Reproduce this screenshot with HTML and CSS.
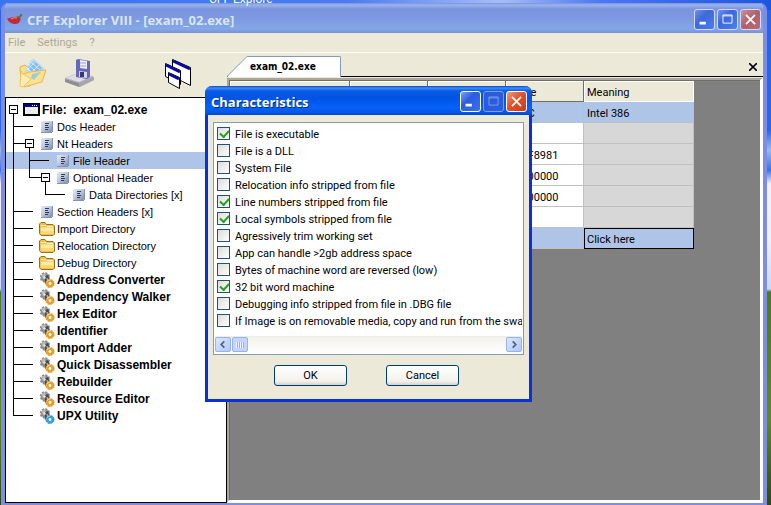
FILE: index.html
```
<!DOCTYPE html>
<html lang="en">
<head>
<meta charset="utf-8">
<title>CFF Explorer VIII - [exam_02.exe]</title>
<link rel="stylesheet" href="styles.css">
</head>
<body>
<svg class="defs" aria-hidden="true">
  <linearGradient id="steel" x1="0" y1="0" x2="1" y2="1"><stop offset="0" stop-color="#e6e9f2"/><stop offset=".45" stop-color="#c3cbdd"/><stop offset="1" stop-color="#7d8eb0"/></linearGradient>
  <symbol id="page" viewBox="0 0 13 13"><rect x="1" y="1" width="11" height="11" rx="1" fill="url(#steel)"/><path d="M1 12.500h11M12.500 1v11" stroke="#8494b4"/><path d="M5 3.500h4M5 5.500h3M5 7.500h4M5 9.500h3" stroke="#2a3a60"/></symbol>
  <symbol id="folder" viewBox="0 0 16 14"><path d="M.5 11.500V2L2 .5h4L7.500 2.500H14L15.500 4v8L14 13.500H2z" fill="#f0c24c" stroke="#98701c"/><path d="M2 5.500h12.500V12H2z" fill="#ffeaa6"/><path d="M2 3.500h5l1 1h6" stroke="#fff3c4" fill="none"/><path d="M2 9h12.500v3H2z" fill="#fbd873"/></symbol>
  <symbol id="gears" viewBox="0 0 16 16"><circle cx="6" cy="5.500" r="4" fill="#909090" stroke="#8a8a8a" stroke-width="2.500" stroke-dasharray="2 1.100"/><path d="M2 3l4-2 1 3-3 3z" fill="#b8b8b8"/><path d="M6 4l3-1 1 2-1 5-3 2V8z" fill="#4c4c4c"/><path d="M4 5l2-1 1 2-2 1z" fill="#e2e2e2"/><path d="M8 6l1 5" stroke="#d0d0d0"/><circle cx="11" cy="11.500" r="3.300" fill="none" stroke="currentColor" stroke-width="2.500" stroke-dasharray="2.100 .5"/><circle cx="11" cy="11.500" r="2.400" fill="none" stroke="currentColor" stroke-width="2"/><path d="M8 10q1-2 3-2" stroke="#fff" stroke-opacity=".5" fill="none"/><circle cx="11" cy="11.500" r="1" fill="#fff"/></symbol>
</svg>
<div class="desktop">
<span class="desktop-label">CFF Explore</span>
<main class="window">
  <header class="titlebar">
    <svg class="pepper" viewBox="0 0 16 14" aria-hidden="true"><path d="M0 5C2 6 4 3.500 8 4c3-1.500 6 0 5.500 2.500C13 10 10 11.500 7 11 3 10.500 1 8 0 5z" fill="#c22b35"/><path d="M4 6q3-2 6-1" stroke="#f08c8c" fill="none"/><path d="M11 4q3 0 3.500-3" stroke="#5d7a3b" stroke-width="2" fill="none"/></svg>
    <h1>CFF Explorer VIII - [exam_02.exe]</h1>
    <button class="caption" aria-label="Minimize"><svg viewBox="0 0 21 21"><path d="M5 14.500h7" stroke="#fff" stroke-width="3"/></svg></button>
    <button class="caption" aria-label="Maximize"><svg viewBox="0 0 21 21"><path d="M5.500 5.500h10v9h-10zM5 6.500h11" stroke="#fff" fill="none"/></svg></button>
    <button class="caption close" aria-label="Close"><svg viewBox="0 0 21 21"><path d="M5.500 5.500l10 10M15.500 5.500l-10 10" stroke="#fff" stroke-width="2"/></svg></button>
  </header>
  <nav class="menu"><button>File</button><button>Settings</button><button>?</button></nav>
  <div class="client">
    <section class="side">
      <div class="toolbar">
        <button class="tool" aria-label="Open"><svg width="30" height="30" viewBox="0 0 30 30"><path d="M2 8l5-2 5 5v16H3z" fill="#ffe184" stroke="#e0b050"/><path d="M7 11L13 1l3-1 11 10-10 12-9-4z" fill="#b5dcf8"/><path d="M10 8l6-6 8 7-7 8z" fill="#5fa4e6" opacity=".55"/><path d="M10 5l9 9M13 3l9 8M8 8l8 8M21 6l-9 9M17 3l-8 8" stroke="#e8f6ff" stroke-opacity=".7"/><path d="M5 15l7-2 16-2-4 12-18 5z" fill="#ffe08c" stroke="#ecb654"/><path d="M14 15l9-2-7 8-3-2z" fill="#8cc4ee" opacity=".8"/><path d="M3 12l2 3 8 5-8 8-3-1z" fill="#fff0b0" stroke="#f0c468"/></svg></button>
        <button class="tool save" aria-label="Save"><svg width="30" height="30" viewBox="0 0 30 30"><path d="M0 19l10-4 18 2 1 4-14 7L0 22z" fill="#b4b4b8"/><path d="M1 19l10-4 16 2-13 6z" fill="#dedee2"/><path d="M0 20l14 4v4L0 23z" fill="#8d8d94"/><path d="M14 24l15-6v3l-15 7z" fill="#a5a5ac"/><path d="M11 1l2-1 12 2v16l-3 2-11-2z" fill="#6767bc"/><path d="M15 1l7 1v8l-7-1z" fill="#ececf8"/><path d="M15 4h6M15 7h6" stroke="#a4a4c8"/><path d="M14 12l8 1v6l-8-1z" fill="#d8d8e4"/><path d="M15 13h4v5h-4z" fill="#36367c"/></svg></button>
        <button class="tool cascade" aria-label="Cascade windows"><svg width="28" height="30" viewBox="0 0 28 30"><g fill="#fff" stroke="#000"><path d="M8.500.5l18 8v18l-8-4-10-5z"/><path d="M1.500 4.500l15 7v14l-15-8z"/><path d="M4.500 13.500l11 5v11l-11-6z"/></g><path d="M9 2l17 8M2 6l14 7M5 15l10 5" stroke="#0808a8" stroke-width="3"/></svg></button>
      </div>
      <div class="tree" role="tree">
        <div class="row root"><button class="cell box top" aria-label="Collapse file"></button><svg class="exe" width="17" height="13" viewBox="0 0 17 13"><path d="M1 1h15v11H1z" fill="#ececec" stroke="#000" stroke-width="2"/><path d="M1 1h15v3H1z" fill="#000080"/><path d="M9 2.500h1M11 2.500h1M13 2.500h1" stroke="#fff"/></svg><b>File:&nbsp; exam_02.exe</b></div>
        <div class="row"><i class="cell tee"></i><i class="cell dash"></i><svg class="icon pg"><use href="#page"/></svg><span>Dos Header</span></div>
        <div class="row"><i class="cell tee"></i><button class="cell box" aria-label="Collapse Nt Headers"></button><svg class="icon pg"><use href="#page"/></svg><span>Nt Headers</span></div>
        <div class="row selected"><i class="cell pass"></i><i class="cell tee"></i><i class="cell dash"></i><svg class="icon pg"><use href="#page"/></svg><span>File Header</span></div>
        <div class="row"><i class="cell pass"></i><i class="cell elbow"></i><button class="cell box" aria-label="Collapse Optional Header"></button><svg class="icon pg"><use href="#page"/></svg><span>Optional Header</span></div>
        <div class="row"><i class="cell pass"></i><i class="cell"></i><i class="cell elbow"></i><i class="cell dash"></i><svg class="icon pg"><use href="#page"/></svg><span>Data Directories [x]</span></div>
        <div class="row"><i class="cell tee"></i><i class="cell dash"></i><svg class="icon pg"><use href="#page"/></svg><span>Section Headers [x]</span></div>
        <div class="row"><i class="cell tee"></i><i class="cell dash"></i><svg class="icon"><use href="#folder"/></svg><span>Import Directory</span></div>
        <div class="row"><i class="cell tee"></i><i class="cell dash"></i><svg class="icon"><use href="#folder"/></svg><span>Relocation Directory</span></div>
        <div class="row"><i class="cell tee"></i><i class="cell dash"></i><svg class="icon"><use href="#folder"/></svg><span>Debug Directory</span></div>
        <div class="row"><i class="cell tee"></i><i class="cell dash"></i><svg class="icon"><use href="#gears"/></svg><b>Address Converter</b></div>
        <div class="row"><i class="cell tee"></i><i class="cell dash"></i><svg class="icon"><use href="#gears"/></svg><b>Dependency Walker</b></div>
        <div class="row"><i class="cell tee"></i><i class="cell dash"></i><svg class="icon"><use href="#gears"/></svg><b>Hex Editor</b></div>
        <div class="row"><i class="cell tee"></i><i class="cell dash"></i><svg class="icon"><use href="#gears"/></svg><b>Identifier</b></div>
        <div class="row"><i class="cell tee"></i><i class="cell dash"></i><svg class="icon"><use href="#gears"/></svg><b>Import Adder</b></div>
        <div class="row"><i class="cell tee"></i><i class="cell dash"></i><svg class="icon"><use href="#gears"/></svg><b>Quick Disassembler</b></div>
        <div class="row"><i class="cell tee"></i><i class="cell dash"></i><svg class="icon"><use href="#gears"/></svg><b>Rebuilder</b></div>
        <div class="row"><i class="cell tee"></i><i class="cell dash"></i><svg class="icon"><use href="#gears"/></svg><b>Resource Editor</b></div>
        <div class="row"><i class="cell elbow"></i><i class="cell dash"></i><svg class="icon blue"><use href="#gears"/></svg><b>UPX Utility</b></div>
      </div>
    </section>
    <section class="content">
      <div class="tabs">
        <button class="tab"><svg width="21" height="21" viewBox="0 0 21 21" aria-hidden="true"><path d="M0 21L20 .5h1V21z" fill="#fff"/><path d="M0 20.500L20 .5h1" fill="none" stroke="#7f9db9"/></svg><span>exam_02.exe</span></button>
        <button class="tab-close" aria-label="Close tab"><svg width="8" height="8" viewBox="0 0 8 8"><path d="M0 0l8 8M8 0L0 8" stroke="#000" stroke-width="1.600"/></svg></button>
      </div>
      <div class="grid">
        <table>
          <colgroup><col class="c-first"><col class="c-mid"><col class="c-mid"><col class="c-mid"><col class="c-last"></colgroup>
          <thead><tr><th></th><th></th><th></th><th>Value</th><th>Meaning</th></tr></thead>
          <tbody>
            <tr class="hot"><td></td><td></td><td></td><td>014C</td><td>Intel 386</td></tr>
            <tr><td></td><td></td><td></td><td></td><td></td></tr>
            <tr><td></td><td></td><td></td><td>000F8981</td><td></td></tr>
            <tr><td></td><td></td><td></td><td>00000000</td><td></td></tr>
            <tr><td></td><td></td><td></td><td>00000000</td><td></td></tr>
            <tr><td></td><td></td><td></td><td></td><td></td></tr>
            <tr class="hot"><td></td><td></td><td></td><td></td><td class="focus">Click here</td></tr>
          </tbody>
        </table>
      </div>
    </section>
  </div>
</main>
<section class="dialog" role="dialog" aria-labelledby="dlg-title">
  <header class="titlebar">
    <h2 id="dlg-title">Characteristics</h2>
    <button class="caption" aria-label="Minimize dialog"><svg viewBox="0 0 21 21"><path d="M5 14.500h7" stroke="#fff" stroke-width="3"/></svg></button>
    <button class="caption off" disabled aria-label="Maximize dialog"><svg viewBox="0 0 21 21"><path d="M5.500 5.500h10v9h-10zM5 6.500h11" stroke="#7fa0f0" fill="none"/></svg></button>
    <button class="caption close" aria-label="Close dialog"><svg viewBox="0 0 21 21"><path d="M5.500 5.500l10 10M15.500 5.500l-10 10" stroke="#fff" stroke-width="2"/></svg></button>
  </header>
  <div class="dialog-body">
    <div class="list">
      <div class="options">
        <label><input type="checkbox" checked><span>File is executable</span></label>
        <label><input type="checkbox"><span>File is a DLL</span></label>
        <label><input type="checkbox"><span>System File</span></label>
        <label><input type="checkbox"><span>Relocation info stripped from file</span></label>
        <label><input type="checkbox" checked><span>Line numbers stripped from file</span></label>
        <label><input type="checkbox" checked><span>Local symbols stripped from file</span></label>
        <label><input type="checkbox"><span>Agressively trim working set</span></label>
        <label><input type="checkbox"><span>App can handle &gt;2gb address space</span></label>
        <label><input type="checkbox"><span>Bytes of machine word are reversed (low)</span></label>
        <label><input type="checkbox" checked><span>32 bit word machine</span></label>
        <label><input type="checkbox"><span>Debugging info stripped from file in .DBG file</span></label>
        <label><input type="checkbox"><span>If Image is on removable media, copy and run from the swa</span></label>
      </div>
      <div class="scroll">
        <button aria-label="Scroll left"><svg viewBox="0 0 15 15"><path d="M9 4L5.500 7.500 9 11" fill="none" stroke="#4d6185" stroke-width="2"/></svg></button>
        <span class="thumb"></span>
        <button class="right" aria-label="Scroll right"><svg viewBox="0 0 15 15"><path d="M6 4l3.500 3.500L6 11" fill="none" stroke="#4d6185" stroke-width="2"/></svg></button>
      </div>
    </div>
    <div class="actions"><button>OK</button><button>Cancel</button></div>
  </div>
</section>
</div>
</body>
</html>
```

FILE: styles.css
```
* { box-sizing: border-box; }
body { margin: 0; font: 11px/17px Roboto, sans-serif; color: #000; }
button { font: inherit; color: inherit; padding: 0; border: 0; background: none; }
h1, h2 { margin: 0; flex: 1; font: bold 13px/20px "Open Sans", sans-serif; }
.defs { position: absolute; width: 0; height: 0; }

.desktop {
  position: relative; height: 100vh; overflow: hidden; padding: 3px 4px 0 1px;
  background:
    linear-gradient(90deg, #3a74f0, #4a7cf0 45%, #a8bcf8 65%, #4a78f0 78%, #1c56e0) 0 0 / 100% 10px no-repeat,
    linear-gradient(#2a62e8 0, #2a66ea 130px, #9cb8f0 150px, #3b70e8 170px, #f4f0fa 184px, #f0f0fa 240px, #c9d8f4 289px, #4c7a1e 292px, #5f8a20 420px, #2d4a12);
}
.desktop-label { position: absolute; left: 209px; top: -8px; font-size: 12px; line-height: 14px; color: #fff; }

.window { display: flex; flex-direction: column; height: 100%; border: solid #7b8ee0; border-width: 0 4px 2px; border-radius: 7px 7px 0 0; background: #ece9d8; overflow: hidden; }
.titlebar { display: flex; align-items: center; gap: 2px; flex: none; color: #fff; }
.window .titlebar { height: 30px; padding: 3px 2px 0; background: linear-gradient(#7c90e0, #9ab4ec 2px, #7a94df 6px, #7e9ae2 16px, #83a8e6 26px, #7790da); color: #dbe5fa; }
.pepper { width: 16px; height: 14px; margin-right: 2px; }

.caption { width: 21px; height: 21px; border: 1px solid #cfdcf8; border-radius: 3px; background: linear-gradient(135deg, #6f92ee, #3d68dc 40%, #4f7ee8); }
.caption svg { display: block; width: 19px; height: 19px; }
.window .close { background: linear-gradient(135deg, #cf8f96, #b0606c 50%, #b96c70); }

.menu { display: flex; flex: none; gap: 12px; height: 20px; padding: 0 3px; border-bottom: 1px solid #fff; color: #aca899; }
.client { display: flex; flex: 1; min-height: 0; }
.side { display: flex; flex-direction: column; width: 222px; flex: none; }
.toolbar { display: flex; height: 44px; padding: 6px 13px 0; }
.tool { display: block; height: 30px; }
.tool svg { display: block; }
.save { margin-left: 17px; }
.cascade { margin-left: 69px; }

.tree { flex: 1; border: 1px solid #000; background: #fff; padding-top: 3px; font-family: "Liberation Sans", sans-serif; overflow: hidden; }
.row { display: flex; align-items: center; height: 17px; white-space: nowrap; }
.row b { font-size: 12px; }
.row b, .row span, .options span { padding-top: 2px; }
.selected { background: #afc5e7; }
.cell { --ink: linear-gradient(#000, #000); flex: none; width: 16px; height: 17px; background-repeat: no-repeat; }
.pass { background: var(--ink) 7px 0 / 1px 17px no-repeat; }
.tee { background: var(--ink) 7px 0 / 1px 17px no-repeat, var(--ink) 7px 8px / 9px 1px no-repeat; }
.elbow { background: var(--ink) 7px 0 / 1px 9px no-repeat, var(--ink) 7px 8px / 9px 1px no-repeat; }
.dash { background: var(--ink) 0 8px / 11px 1px no-repeat; }
.box {
  background:
    var(--ink) 5px 8px / 5px 1px no-repeat,
    linear-gradient(#fff, #fff) 4px 5px / 7px 7px no-repeat,
    var(--ink) 3px 4px / 9px 9px no-repeat,
    var(--ink) 7px 12px / 1px 5px no-repeat,
    var(--ink) 0 8px / 3px 1px no-repeat;
}
.top { background-size: 5px 1px, 7px 7px, 9px 9px, 1px 5px, 0 0; }
.icon { flex: none; width: 16px; height: 16px; margin: 0 2px 0 1px; color: #e5a02c; }
.pg { width: 13px; height: 13px; margin: 0 4px 0 2px; }
.blue { color: #31a0da; }
.exe { flex: none; margin: 0 2px 0 1px; }

.content { display: flex; flex: 1; flex-direction: column; min-width: 0; }
.tabs { display: flex; align-items: stretch; flex: none; height: 25px; padding-top: 3px; background: linear-gradient(#000, #000) 0 23px / 100% 1px no-repeat; }
.tab { display: flex; height: 21px; font: bold 10px/20px "DejaVu Sans Condensed", "DejaVu Sans", sans-serif; }
.tab span { padding: 0 24px 0 2px; border: 1px solid #7f9db9; border-left: 0; border-bottom: 0; border-radius: 0 2px 0 0; background: #fff; }
.tab svg { display: block; }
.tab-close { margin: 7px 6px 6px auto; height: 8px; }
.tab-close svg { display: block; }
.grid { flex: 1; min-height: 0; border: solid; border-width: 2px 3px 3px 2px; border-color: #aca899 #fff #fff #aca899; background: #808080; box-shadow: inset 1px 1px #716f64; overflow: hidden; padding: 1px 0 0 1px; }
table { border-collapse: separate; border-spacing: 0; table-layout: fixed; width: 464px; }
.c-first { width: 120px; }
.c-mid { width: 78px; }
.c-last { width: 110px; }
th, td { height: 21px; padding: 2px 0 0 3px; font-weight: normal; text-align: left; line-height: 17px; white-space: nowrap; }
th { background: #ece9d8; border: solid #716f64; border-width: 0 1px 1px 0; box-shadow: inset 1px 1px #fff; }
th:last-child { border-color: #fff; }
td { background: #fff; border: solid #c0c0c0; border-width: 0 1px 1px 0; }
td:last-child { background: #d7d7d7; }
.hot td { background: #afc5e7; }
.hot .focus { border: 1px solid #000; padding: 1px 0 0 2px; }

.dialog { position: absolute; left: 205px; top: 86px; width: 327px; border: 3px solid #0831d9; border-top: 0; border-radius: 7px 7px 0 0; background: #ece9d8; }
.dialog .titlebar { height: 29px; margin: 0 -3px; padding: 2px 5px 0 6px; border-radius: 7px 7px 0 0; background: linear-gradient(#0a44c8, #3c8ff8 2px, #0a5ce4 5px, #0054e3 12px, #0462fb 22px, #0457e8 26px, #0148d0); text-shadow: 1px 1px #0a2a88; }
.dialog .caption { border-color: #fff; background: linear-gradient(135deg, #7da0f4, #2a5ce0 40%, #3a70ee); }
.dialog .off { border-color: #7f9ef0; background: #2a5cdc; }
.dialog .close { background: linear-gradient(135deg, #f09a80, #e2522c 45%, #c83c18); }
.dialog-body { padding: 7px 5px 13px; }
.list { border: 1px solid #7f9db9; background: #fff; padding: 1px; }
.options { padding: 1px 1px 7px 2px; overflow: hidden; }
.options label { display: flex; align-items: center; gap: 5px; height: 17px; white-space: nowrap; }
.options input { appearance: none; flex: none; width: 13px; height: 13px; margin: 0; border: 1px solid #1c5180; background: linear-gradient(135deg, #dcdcd7, #fff); }
.options input:checked::before { content: ""; display: block; width: 7px; height: 4px; margin: 2px 0 0 2px; border: solid #21a121; border-width: 0 0 2px 2px; transform: rotate(-48deg); }
.scroll { display: flex; height: 17px; border-top: 1px solid #eeede5; background: linear-gradient(#f3f1ec, #fefefb); }
.scroll button, .thumb { width: 16px; height: 15px; border: 1px solid #98b3e8; border-radius: 2px; background: linear-gradient(135deg, #dbe6ff, #b3c8f8); }
.scroll svg { display: block; width: 14px; height: 13px; }
.thumb { margin-left: 1px; background: repeating-linear-gradient(90deg, #eef4fe 0 1px, #8cb0f8 1px 2px) 3px 4px / 8px 6px no-repeat, #c4d4fc; }
.right { margin-left: auto; }
.actions { display: flex; justify-content: center; gap: 39px; padding: 10px 4px 0 0; }
.actions button { width: 73px; height: 21px; border: 1px solid #003c74; border-radius: 3px; background: linear-gradient(#fff, #f2f1ea 80%, #d8d2c4); line-height: 19px; }
```
